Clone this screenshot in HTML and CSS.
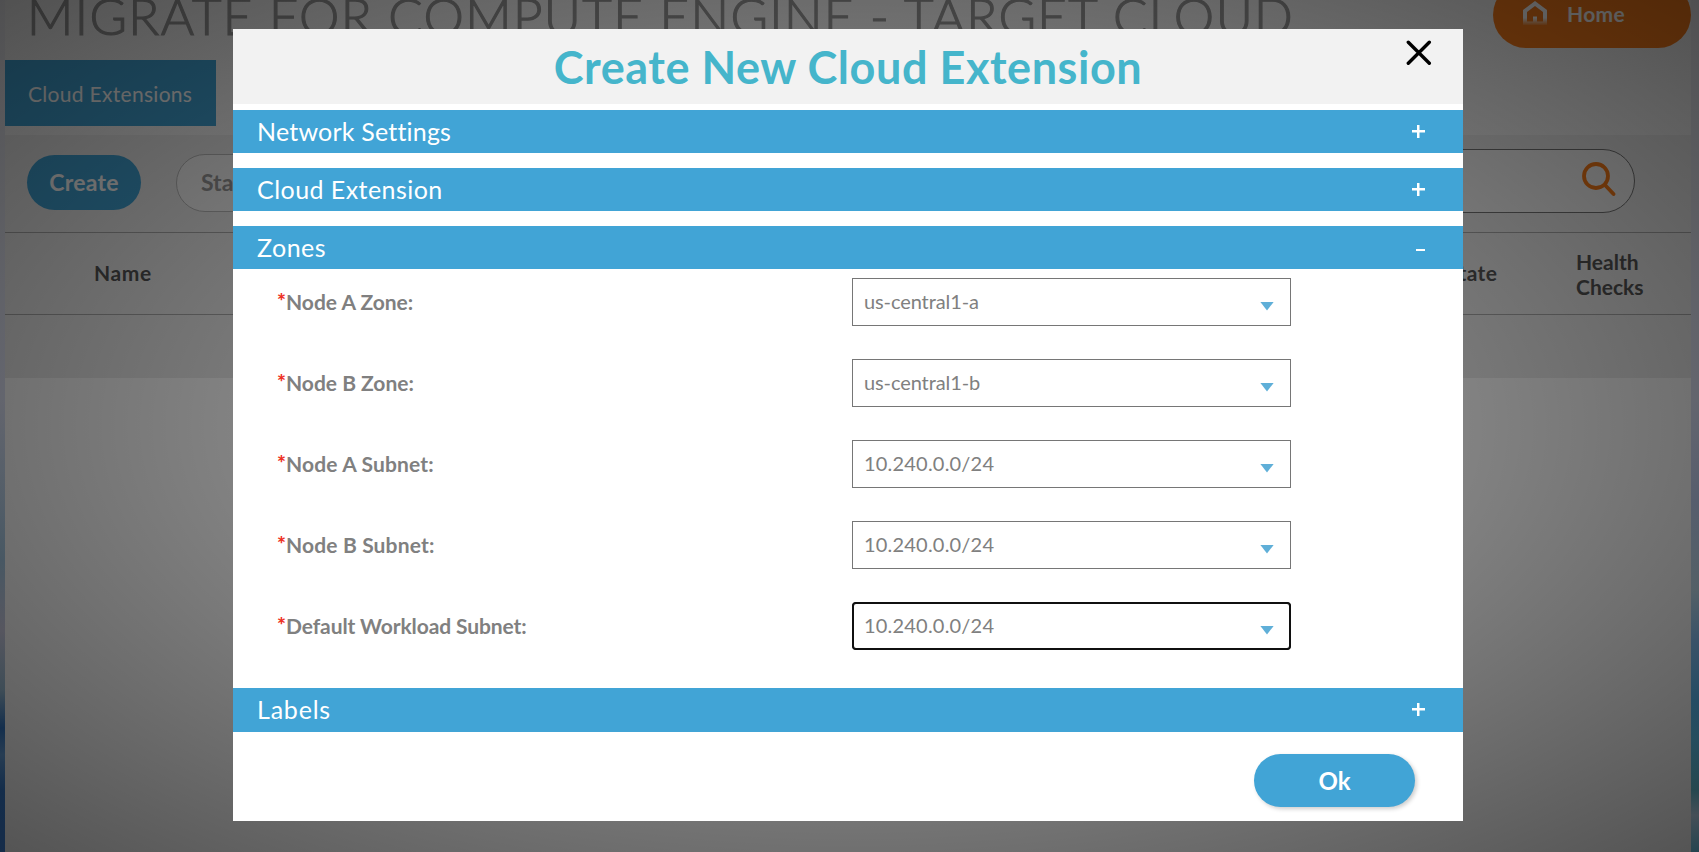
FILE: index.html
```html
<!DOCTYPE html>
<html lang="en">
<head>
<meta charset="utf-8">
<title>Migrate for Compute Engine</title>
<link rel="stylesheet" href="styles.css">
</head>
<body>
<div class="page">
  <header class="page-head">
    <h1 class="page-title">MIGRATE FOR COMPUTE ENGINE - TARGET CLOUD</h1>
    <button class="home">
      <svg class="home-icon" width="24" height="24" viewBox="0 0 24 24">
        <defs><linearGradient id="fade" x1="0" y1="0" x2="0" y2="1"><stop offset="0.7" stop-color="#fff"/><stop offset="1" stop-color="#fff" stop-opacity="0.1"/></linearGradient></defs>
        <path d="M12 0 24 9v15H0V9zM12 5 4 11v9.500h6v-5h4v5h6V11z" fill="url(#fade)" fill-rule="evenodd"/>
      </svg>
      <span class="home-label">Home</span>
    </button>
  </header>
  <nav class="tabs"><a class="tab">Cloud Extensions</a></nav>
  <main class="content">
    <section class="toolbar">
      <button class="btn-create"><span>Create</span></button>
      <button class="btn-start"><span>Start</span></button>
      <div class="search">
        <svg width="34" height="35" viewBox="0 0 34 35" fill="none" stroke="#fb7c17" stroke-width="3.800" stroke-linecap="round"><circle cx="14" cy="14" r="12"/><path d="m23 23 8.500 9"/></svg>
      </div>
    </section>
    <section class="table-head">
      <span class="col-name">Name</span>
      <span class="col-state">State</span>
      <span class="col-health">Health<br>Checks</span>
    </section>
  </main>
</div>

<div class="overlay">
  <div class="modal">
    <div class="modal-head">
      <h2 class="modal-title">Create New Cloud Extension</h2>
      <svg class="close" width="26" height="26" viewBox="0 0 26 26" stroke="#000" stroke-width="3.400" stroke-linecap="round"><path d="M2.300 2.300 23.300 23.300M23.300 2.300 2.300 23.300"/></svg>
    </div>
    <div class="bar"><span class="t-network">Network Settings</span><i class="plus"></i></div>
    <div class="bar"><span class="t-cloud">Cloud Extension</span><i class="plus"></i></div>
    <div class="bar bar-open"><span class="t-zones">Zones</span><i class="minus"></i></div>
    <div class="fields">
      <div class="field"><label><b>*</b><span>Node A Zone:</span></label><div class="select"><span class="v-zone">us-central1-a</span><i class="caret"></i></div></div>
      <div class="field"><label><b>*</b><span>Node B Zone:</span></label><div class="select"><span class="v-zone">us-central1-b</span><i class="caret"></i></div></div>
      <div class="field"><label><b>*</b><span class="l-subnet">Node A Subnet:</span></label><div class="select"><span class="v-net">10.240.0.0/24</span><i class="caret"></i></div></div>
      <div class="field"><label><b>*</b><span class="l-subnet">Node B Subnet:</span></label><div class="select"><span class="v-net">10.240.0.0/24</span><i class="caret"></i></div></div>
      <div class="field"><label><b>*</b><span class="l-default">Default Workload Subnet:</span></label><div class="select focused"><span class="v-net">10.240.0.0/24</span><i class="caret"></i></div></div>
    </div>
    <div class="bar bar-labels"><span class="t-labels">Labels</span><i class="plus"></i></div>
    <div class="modal-foot"><button class="ok"><span>Ok</span></button></div>
  </div>
</div>
</body>
</html>
```
FILE: styles.css
```css
* { box-sizing: border-box; }
html, body { height: 100%; }
body {
  margin: 0;
  overflow: hidden;
  font-family: Lato, "Open Sans", sans-serif;
  font-variant-ligatures: none;
  background:
    linear-gradient(#f0f0f4 0, #e2e4ee 200px, #e2e6fa 400px, #c6d6fa 500px, #c6e4f4 590px, #8fcaff 640px, #5fc3ff 700px, #64cdfa 740px, #69c8de 790px, #c8e4fb 815px, #70cef0 852px) right / 50% 100% no-repeat,
    linear-gradient(#f0f0f4 0, #e2e4ee 200px, #e2e6fa 400px, #a8cde8 560px, #d2d2e8 630px, #9ec3dc 690px, #3278c8 728px, #69a3df 755px, #377dd0 790px, #4184dc 852px);
}
button { font-family: inherit; border: 0; margin: 0; padding: 0; }
.page {
  height: 852px;
  margin: 0 8px 0 5px;
  background: linear-gradient(#f6f6f6 0, #fafafa 378px, #fff 378px);
}

/* Page header, scrolled partly out of view */
.page-head { height: 60px; display: flex; justify-content: space-between; align-items: flex-start; }
.page-title {
  width: 1290px;
  margin: -14px 0 0 22px;
  font-size: 51px;
  line-height: 60px;
  font-weight: 300;
  letter-spacing: 1.4px;
  white-space: nowrap;
  color: #989898;
  -webkit-text-stroke: 1.2px #989898;
}
.home {
  width: 198px;
  height: 66px;
  margin-top: -18px;
  padding: 16px 0 0 30px;
  border-radius: 33px;
  background: #f97c1a;
  display: flex;
  align-items: flex-start;
  gap: 20px;
}
.home-icon { margin-top: 3px; }
.home-label { font-size: 21px; line-height: 32px; font-weight: 700; letter-spacing: 0.3px; color: #fff; }

.tabs { height: 75px; }
.tab {
  display: block;
  width: 211px;
  height: 66px;
  padding-left: 23px;
  font-size: 21px;
  line-height: 67px;
  letter-spacing: 0.3px;
  white-space: nowrap;
  color: #fff;
  background: #41a4d6;
}

.content { height: 243px; background: #ececec; }
.toolbar { height: 98px; padding: 0 56px 0 22px; border-bottom: 1px solid #aaa; display: flex; align-items: flex-start; }
.btn-create { width: 114px; height: 55px; margin-top: 20px; padding-bottom: 2px; border-radius: 28px; background: #41a4d6; color: #fff; font-size: 23px; font-weight: 700; letter-spacing: 0.25px; }
.btn-start { width: 140px; height: 58px; margin: 19px 0 0 35px; padding: 0 0 2px 24px; text-align: left; border: 1px solid #bbb; border-radius: 29px; background: #f8f8f8; color: #999; font-size: 23px; font-weight: 700; }
.search { width: 500px; height: 64px; margin: 14px 0 0 auto; padding: 12px 18px 0 0; border: 1px solid #777; border-radius: 32px; background: #f8f8f8; display: flex; justify-content: flex-end; }
.table-head { height: 82px; padding-top: 1px; border-bottom: 1px solid #aaa; display: grid; grid-template-columns: 1350px 221px 115px; align-items: center; font-size: 21px; line-height: 25px; font-weight: 700; color: #555; }
.col-name { padding: 0 0 3px 89px; letter-spacing: 0.6px; }
.col-state { padding: 0 0 3px 92px; letter-spacing: 0.4px; }

/* Modal */
.overlay {
  position: absolute;
  inset: 0;
  padding-top: 29px;
  background: radial-gradient(ellipse farthest-corner at center, rgba(0,0,0,0.3), rgba(0,0,0,0.67));
}
.modal { width: 1230px; height: 792px; margin-left: 233px; background: #fff; }
.modal-head { position: relative; height: 75px; margin-bottom: 6px; background: #f2f2f2; display: flex; justify-content: center; }
.modal-title { margin: 0; font-size: 45px; line-height: 76px; font-weight: 700; letter-spacing: 0.55px; white-space: nowrap; color: #45b5cb; }
.close { position: absolute; left: 1173px; top: 10.500px; }
.bar { height: 43px; margin-bottom: 15px; padding: 0 38px 0 24px; background: #41a4d6; color: #fff; font-size: 25px; line-height: 42px; display: flex; justify-content: space-between; align-items: center; }
.bar span { height: 43px; }
.t-network { letter-spacing: 0.2px; }
.t-cloud { letter-spacing: 0.45px; }
.t-zones { letter-spacing: 0.5px; }
.t-labels { letter-spacing: 0.8px; }
.bar-open { margin-bottom: 0; }
.bar-labels { height: 44px; margin: 0; line-height: 41px; }
.plus { width: 13px; height: 13px; background: linear-gradient(#fff, #fff) 50% 50% / 13px 2.500px no-repeat, linear-gradient(#fff, #fff) 50% 50% / 2.500px 13px no-repeat; }
.bar-labels .plus { margin-bottom: 1px; }
.minus { width: 9px; height: 2px; margin-top: 4px; background: #fff; }

.fields { height: 419px; padding: 9px 0 0 44px; }
.field { height: 48px; margin-bottom: 33px; display: grid; grid-template-columns: 575px 439px; }
label { display: flex; font-size: 21px; line-height: 48px; font-weight: 700; white-space: nowrap; color: #808080; }
label b { width: 9px; color: #ee3124; line-height: 46px; }
.l-subnet { letter-spacing: 0.15px; }
.l-default { letter-spacing: -0.1px; }
.select { border: 1px solid #767676; padding: 0 16px 0 11px; display: flex; justify-content: space-between; align-items: center; font-size: 20px; color: #808080; }
.select span { margin-top: -3px; }
.v-zone { letter-spacing: -0.1px; }
.v-net { letter-spacing: 0.2px; }
.caret { width: 14px; height: 9px; margin-top: 8px; background: #5fafd8; clip-path: polygon(0 0, 100% 0, 50% 100%); }
.focused { border-color: #101010; outline: 2px solid #101010; outline-offset: -2px; border-radius: 4px; }

.modal-foot { padding: 22px 48px 0 0; display: flex; justify-content: flex-end; }
.ok { width: 161px; height: 53px; padding-bottom: 1px; border-radius: 27px; background: #41a4d6; box-shadow: 2px 2px 4px rgba(0,0,0,0.2); color: #fff; font-size: 24px; font-weight: 700; }
```
